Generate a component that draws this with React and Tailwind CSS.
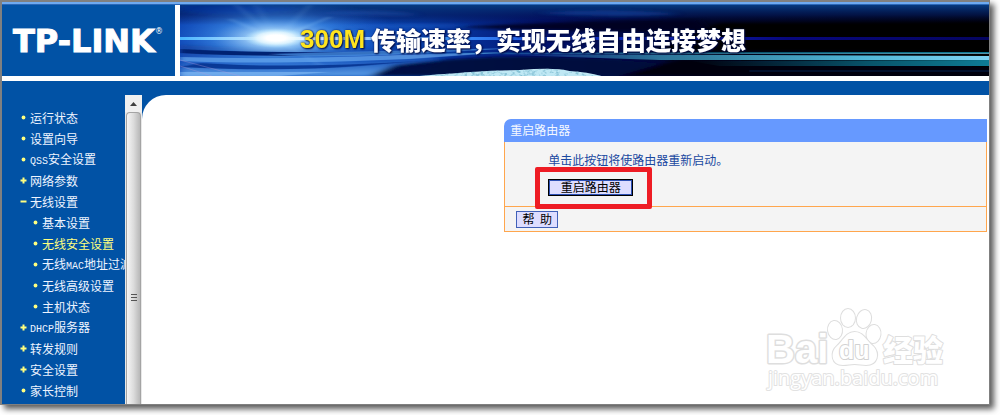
import React from "react";

const menu = [
  { label: "运行状态", mark: "dot" },
  { label: "设置向导", mark: "dot" },
  { latin: "QSS", label: "安全设置", mark: "dot" },
  { label: "网络参数", mark: "plus" },
  { label: "无线设置", mark: "minus" },
  { label: "基本设置", mark: "dot", sub: true },
  { label: "无线安全设置", mark: "dot", sub: true, active: true },
  { before: "无线", latin: "MAC", label: "地址过滤", mark: "dot", sub: true },
  { label: "无线高级设置", mark: "dot", sub: true },
  { label: "主机状态", mark: "dot", sub: true },
  { latin: "DHCP", label: "服务器", mark: "plus" },
  { label: "转发规则", mark: "plus" },
  { label: "安全设置", mark: "plus" },
  { label: "家长控制", mark: "dot" },
];

function Marker({ kind }) {
  return (
    <svg viewBox="0 0 7 7" className="h-[7px] w-[7px] shrink-0" fill="#ffff80" aria-hidden="true">
      {kind === "dot" && <circle cx="3.5" cy="3.5" r="1.9" />}
      {kind === "plus" && <path d="M2.5 .5h2v2h2v2h-2v2h-2v-2h-2v-2h2z" />}
      {kind === "minus" && <path d="M.5 2.5h6v2h-6z" />}
    </svg>
  );
}

function MenuItem({ item }) {
  return (
    <li className={item.sub ? "flex h-[21px] items-center gap-[3px] pl-[30px]" : "flex h-[21px] items-center gap-[3px] pl-[18px]"}>
      <Marker kind={item.mark} />
      <a href="#" className={item.active ? "leading-[21px] text-[#ffff80]" : "leading-[21px] text-[#eef4ff]"}>
        {item.before}
        {item.latin && <span className="font-['Liberation_Mono',monospace] text-[10px]">{item.latin}</span>}
        {item.label}
      </a>
    </li>
  );
}

function BannerArt() {
  return (
    <svg viewBox="0 0 810 71" preserveAspectRatio="none" className="absolute inset-0 h-full w-full" aria-hidden="true">
      <defs>
        <linearGradient id="base" x1="0" x2="1" y1="0" y2="0">
          <stop offset="0" stopColor="#0a41b0" />
          <stop offset=".14" stopColor="#1559c8" />
          <stop offset=".3" stopColor="#0840ac" />
          <stop offset=".45" stopColor="#021270" />
          <stop offset=".65" stopColor="#00041f" />
          <stop offset="1" stopColor="#000" />
        </linearGradient>
        <linearGradient id="sky" x1="0" x2="0" y1="0" y2="1">
          <stop offset="0" stopColor="#063a80" />
          <stop offset=".5" stopColor="#041a5c" stopOpacity=".7" />
          <stop offset="1" stopColor="#000030" stopOpacity="0" />
        </linearGradient>
        <linearGradient id="water" x1="0" x2="0" y1="0" y2="1">
          <stop offset="0" stopColor="#0a2c88" />
          <stop offset=".5" stopColor="#1a55bb" />
          <stop offset="1" stopColor="#5b9ee6" />
        </linearGradient>
        <radialGradient id="halo">
          <stop offset="0" stopColor="#fff" />
          <stop offset=".2" stopColor="#b4e0ff" stopOpacity=".85" />
          <stop offset=".5" stopColor="#4b9cf0" stopOpacity=".5" />
          <stop offset="1" stopColor="#1758d0" stopOpacity="0" />
        </radialGradient>
        <radialGradient id="core">
          <stop offset=".3" stopColor="#fff" />
          <stop offset=".6" stopColor="#e4f8ff" stopOpacity=".8" />
          <stop offset="1" stopColor="#9fdcff" stopOpacity="0" />
        </radialGradient>
        <linearGradient id="beam" x1="0" x2="1" y1="0" y2="0">
          <stop offset="0" stopColor="#48b4ff" />
          <stop offset=".14" stopColor="#fff" />
          <stop offset=".32" stopColor="#3f9bff" />
          <stop offset=".5" stopColor="#1236d4" />
          <stop offset=".75" stopColor="#07077c" />
          <stop offset="1" stopColor="#050560" />
        </linearGradient>
        <linearGradient id="teal" x1="0" x2="1" y1="0" y2="0">
          <stop offset="0" stopColor="#3c98d0" stopOpacity="0" />
          <stop offset=".35" stopColor="#3fa3c6" stopOpacity=".7" />
          <stop offset=".75" stopColor="#4fb6d8" />
          <stop offset="1" stopColor="#7fd4f4" />
        </linearGradient>
        <linearGradient id="deep" x1="0" x2="1" y1="0" y2="0">
          <stop offset="0" stopColor="#0a6d8c" stopOpacity="0" />
          <stop offset=".6" stopColor="#0c7894" stopOpacity=".7" />
          <stop offset="1" stopColor="#0e7b96" />
        </linearGradient>
        <filter id="soft" x="-20%" y="-60%" width="140%" height="220%"><feGaussianBlur stdDeviation="5 1.5" /></filter>
        <filter id="thin" x="-20%" y="-60%" width="140%" height="220%"><feGaussianBlur stdDeviation="3 .5" /></filter>
        <filter id="foam" x="0" y="0" width="1" height="1">
          <feTurbulence type="fractalNoise" baseFrequency=".25 .35" numOctaves="2" seed="4" result="n" />
          <feColorMatrix in="n" type="matrix" values="0 0 0 0 .25  0 0 0 0 .55  0 0 0 0 .68  4 2 0 0 -2.9" result="c" />
          <feComposite in="c" in2="SourceGraphic" operator="in" />
        </filter>
      </defs>
      <rect width="810" height="71" fill="url(#base)" />
      <rect width="810" height="20" fill="url(#sky)" />
      <g filter="url(#soft)">
        <path d="M0 6Q60 14 120 4L60 0H0z" fill="#002c98" opacity=".6" />
        <path d="M140 8Q200 2 240 10Q190 12 140 8zM160 22Q220 18 290 20Q230 26 160 22z" fill="#2762c4" opacity=".35" />
        <path d="M275 22Q420 14 520 15L530 26Q400 28 275 22z" fill="#00001e" opacity=".9" />
        <path d="M540 18H810V46H470z" fill="#000" />
        <path d="M360 8Q430 2 500 9Q430 14 360 8z" fill="#1244a0" opacity=".6" />
        <path d="M0 40Q120 46 230 44Q280 56 240 64L200 71H0z" fill="url(#water)" />
        <path d="M215 60Q330 44 480 58L460 71H190z" fill="#01073c" opacity=".95" />
        <path d="M500 54L440 71H810V62z" fill="#000010" />
      </g>
      <ellipse cx="96" cy="33" rx="130" ry="40" fill="url(#halo)" />
      <g stroke="#a8dcff" strokeWidth="2" opacity=".22" filter="url(#thin)">
        <path d="M96 34L56 0M96 34L76 0M96 34L130 0M96 34L150 12M96 34L50 14M96 34L140 60" />
      </g>
      <rect y="32" width="810" height="3" fill="url(#beam)" />
      <ellipse cx="96" cy="33" rx="32" ry="10" fill="url(#core)" />
      <g filter="url(#thin)">
        <path d="M0 44Q120 50 260 45L240 47Q100 54 0 48z" fill="#062272" />
        <path d="M0 52Q100 55 220 50L330 47L230 54Q90 60 0 56z" fill="#6aa9ef" opacity=".7" />
        <path d="M20 58Q110 64 240 56L180 61Q100 67 0 62z" fill="#082c88" opacity=".8" />
        <path d="M90 49Q190 46 340 43L210 50Q130 53 90 49z" fill="#4b94e4" opacity=".7" />
        <path d="M0 67H150L100 71H0z" fill="#7db7f2" opacity=".7" />
      </g>
      <path d="M0 55L60 71M0 61L32 71" stroke="#b79ad8" opacity=".35" />
      <rect x="230" y="47" width="580" height="1" fill="url(#deep)" />
      <rect x="170" y="48" width="640" height="1" fill="url(#teal)" opacity=".7" />
      <path d="M300 49L810 51V55H480z" fill="url(#teal)" />
      <path d="M510 56L810 55V61H540z" fill="url(#deep)" />
      <path d="M570 66H810" stroke="#04204c" />
      <path d="M240 71Q310 65 340 65Q375 62 390 66Q408 67 422 71z" fill="#bfe8f4" />
      <path d="M240 71Q310 65 340 65Q375 62 390 66Q408 67 422 71z" fill="#fff" filter="url(#foam)" />
    </svg>
  );
}

function Header() {
  return (
    <header className="flex h-[76px] gap-[5px] border-b-[5px] border-white bg-white">
      <div className="flex w-[173px] shrink-0 items-center bg-[#0152a5] pl-[11px]">
        <a href="#" className="flex items-start font-['DejaVu_Sans',sans-serif] text-[32px] leading-8 font-bold text-white [-webkit-text-stroke:1px_#fff]">
          TP-LINK<span className="mt-[3px] text-[8px] leading-none font-normal [-webkit-text-stroke:0]">®</span>
        </a>
      </div>
      <div className="relative min-w-0 flex-1 overflow-hidden">
        <BannerArt />
        <p className="relative flex h-[68px] items-center gap-[6px] pl-[120px] text-[25px] font-bold whitespace-nowrap text-white [text-shadow:0_0_2px_#001a60,1px_1px_2px_#000030]">
          <span className="font-['Liberation_Sans',sans-serif] text-[26px] text-[#ffe51e]">300M</span>
          <span className="leading-none font-black">传输速率，实现无线自由连接梦想</span>
        </p>
      </div>
    </header>
  );
}

function Scrollbar() {
  return (
    <div className="flex w-[17px] shrink-0 flex-col bg-[#e8e8e8]">
      <button type="button" aria-label="向上滚动" className="flex h-[17px] items-center justify-center bg-[#f0f0f0]">
        <svg viewBox="0 0 7 4" className="h-1 w-[7px]" aria-hidden="true"><path d="M3.5 0L7 4H0z" fill="#404040" /></svg>
      </button>
      <div className="mx-px flex flex-1 flex-col items-center rounded-t-sm border border-b-0 border-[#a4a4a4] bg-linear-to-r from-[#f5f5f5] via-[#dcdcdc] to-[#b8b8b8] pt-[180px]">
        <svg viewBox="0 0 8 8" className="h-2 w-2" aria-hidden="true"><path d="M1 1.5h6M1 4.5h6M1 7.5h6" stroke="#555" /></svg>
      </div>
    </div>
  );
}

function Watermark() {
  return (
    <svg viewBox="0 0 184 92" className="absolute right-[43px] bottom-[7px] h-[92px] w-[184px]" role="img" aria-label="Baidu 经验">
      <g fill="#fff" stroke="#dedede" strokeWidth="2" strokeLinejoin="round" paintOrder="stroke">
        <text x="4" y="58" strokeWidth="3" className="font-['Liberation_Sans',sans-serif] text-[40px] font-bold">Bai</text>
        <ellipse cx="73" cy="25" rx="7" ry="9" transform="rotate(-8 73 25)" />
        <ellipse cx="86" cy="13" rx="7" ry="9" />
        <ellipse cx="102" cy="14" rx="7" ry="9" transform="rotate(14 102 14)" />
        <ellipse cx="111.5" cy="29" rx="7" ry="9" transform="rotate(8 111.5 29)" />
        <path d="M92.5 27C84 27 81 36 75 41C68 47 69 60 81 60C86 60 88 59 92.5 59C97 59 100 60 104 60C116 60 118 48 111 41C104 35 101 27 92.5 27z" />
        <text x="77" y="54" stroke="#d2d2d2" className="font-['Liberation_Sans',sans-serif] text-[25px] font-bold">du</text>
        <text x="121" y="56" className="font-['Noto_Sans_CJK_SC',sans-serif] text-[30px] font-black">经验</text>
      </g>
      <text x="6" y="80" fill="#fff" stroke="#e2e2e2" strokeWidth="2" strokeLinejoin="round" paintOrder="stroke" className="font-['Open_Sans',sans-serif] text-[20px]">jingyan.baidu.com</text>
    </svg>
  );
}

function RestartPanel() {
  return (
    <section className="mt-[24px] mr-[2px] ml-auto w-[57%] text-[12px]">
      <h1 className="flex h-[23px] items-center rounded-tl-[7px] bg-[#6699ff] pb-px pl-[6px] text-[#f4f8ff]">重启路由器</h1>
      <div className="border border-t-0 border-[#ffa64d] bg-[#f4f4f4]">
        <div className="flex h-[65px] flex-col items-start gap-[10px] border-b border-[#ffa64d] pt-[9px] pl-[43px]">
          <p className="leading-[18px] text-[#1a48a0]">单击此按钮将使路由器重新启动。</p>
          <div className="relative">
            <button type="button" className="flex h-[17px] w-[85px] items-center justify-center border border-black bg-[#ddddff] pb-px leading-none text-black shadow-[inset_0_0_0_1px_#2c4fb4]">
              重启路由器
            </button>
            <span className="pointer-events-none absolute -top-3 -right-[19px] -bottom-[13px] -left-[13px] rounded-[2px] border-[5px] border-[#ee1c24]" />
          </div>
        </div>
        <div className="flex h-6 items-center pl-[11px]">
          <button type="button" className="flex h-[17px] w-[42px] items-center justify-center border border-[#4060b8] bg-[#ddddff] pb-px leading-none whitespace-pre text-black">
            {"帮  助"}
          </button>
        </div>
      </div>
    </section>
  );
}

export default function App() {
  return (
    <div className="overflow-hidden bg-white pr-[10px] pb-[11px] font-['Noto_Sans_CJK_SC',sans-serif]">
      <div className="border-t-2 border-r border-b border-l-2 border-[#808080] bg-[#0152a5] shadow-[4px_4px_6px_rgba(0,0,0,0.65)]">
        <div className="h-[3px] border-t-2 border-[#6faaf0] bg-[#2b68b8]" />
        <Header />
        <div className="h-[14px] bg-[#0152a5]" />
        <div className="flex">
          <nav className="w-[123px] shrink-0 overflow-hidden pt-[12px] pb-[3px]">
            <ul className="text-[12px] whitespace-nowrap">
              {menu.map((item, i) => (
                <MenuItem key={i} item={item} />
              ))}
            </ul>
          </nav>
          <Scrollbar />
          <main className="relative min-w-0 flex-1 rounded-tl-[24px] bg-white">
            <RestartPanel />
            <Watermark />
          </main>
        </div>
      </div>
    </div>
  );
}
